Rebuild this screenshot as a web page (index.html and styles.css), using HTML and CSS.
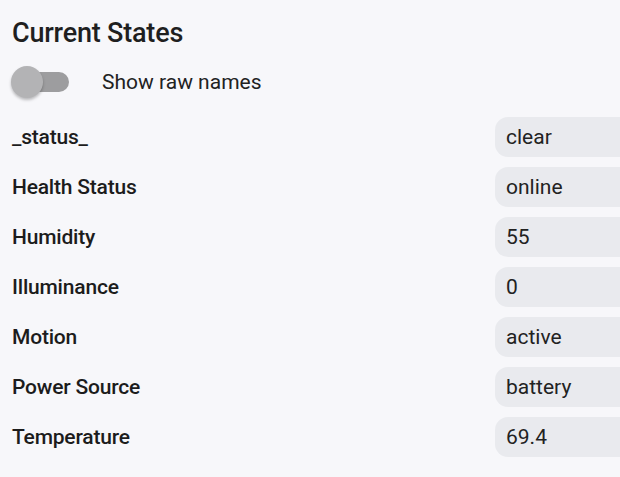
FILE: index.html
```html
<!DOCTYPE html>
<html lang="en">
<head>
    <meta charset="UTF-8">
    <meta name="viewport" content="width=device-width, initial-scale=1.0">
    <title>Current States</title>
    <link rel="stylesheet" href="styles.css">
</head>
<body>
    <div class="states">
        <h2 class="title">Current States</h2>

        <label class="raw-toggle">
            <span class="switch">
                <span class="track"></span>
                <span class="thumb"></span>
            </span>
            <span class="raw-label">Show raw names</span>
        </label>

        <div class="state-list">
            <div class="state-row">
                <span class="state-name">_status_</span>
                <span class="state-value">clear</span>
            </div>
            <div class="state-row">
                <span class="state-name">Health Status</span>
                <span class="state-value">online</span>
            </div>
            <div class="state-row">
                <span class="state-name">Humidity</span>
                <span class="state-value">55</span>
            </div>
            <div class="state-row">
                <span class="state-name">Illuminance</span>
                <span class="state-value">0</span>
            </div>
            <div class="state-row">
                <span class="state-name">Motion</span>
                <span class="state-value">active</span>
            </div>
            <div class="state-row">
                <span class="state-name">Power Source</span>
                <span class="state-value">battery</span>
            </div>
            <div class="state-row">
                <span class="state-name">Temperature</span>
                <span class="state-value">69.4</span>
            </div>
        </div>
    </div>
</body>
</html>
```

FILE: styles.css
```css
html, body {
    margin: 0;
    background: #f7f7fa;
    overflow: hidden;
}
body {
    font-family: Roboto, "Noto Sans", sans-serif;
    color: #1f1f1f;
}
.states {
    padding: 14px 0 0 12px;
}
.title {
    margin: 0;
    font-size: 27px;
    font-weight: 500;
    line-height: 38px;
    letter-spacing: -0.2px;
}

/* toggle for raw attribute names */
.raw-toggle {
    display: flex;
    align-items: center;
    gap: 32px;
    height: 44px;
    margin-top: 8px;
    cursor: pointer;
}
.switch {
    position: relative;
    width: 58px;
    height: 32px;
    display: block;
}
.track {
    position: absolute;
    left: 0;
    top: 6px;
    width: 57px;
    height: 20px;
    border-radius: 10px;
    background: #9d9d9f;
}
.thumb {
    position: absolute;
    left: -1px;
    top: 0;
    width: 32px;
    height: 32px;
    border-radius: 50%;
    background: #b3b3b5;
    box-shadow: 0 2px 3px rgba(0, 0, 0, 0.25);
}
.raw-label {
    font-size: 21px;
    color: #222;
}

.state-list {
    display: flex;
    flex-direction: column;
    gap: 10px;
    margin-top: 13px;
}
.state-row {
    display: grid;
    grid-template-columns: 483px 160px;
    align-items: center;
    height: 40px;
}
.state-name {
    font-size: 21px;
    font-weight: 500;
    letter-spacing: -0.2px;
    color: #1c1c1c;
}
.state-value {
    display: flex;
    align-items: center;
    height: 40px;
    padding-left: 11px;
    border-radius: 13px;
    background: #e9eaee;
    font-size: 21px;
    color: #222;
}
```
